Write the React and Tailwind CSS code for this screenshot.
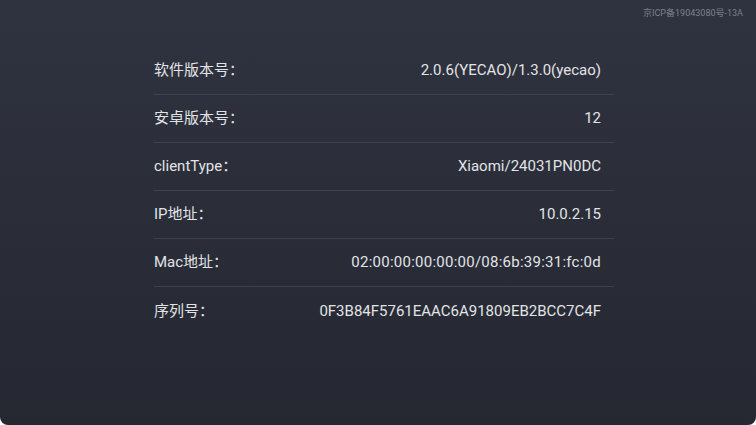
const rows = [
  { label: "软件版本号：", value: "2.0.6(YECAO)/1.3.0(yecao)" },
  { label: "安卓版本号：", value: "12" },
  { label: "clientType：", value: "Xiaomi/24031PN0DC" },
  { label: "IP地址：", value: "10.0.2.15" },
  { label: "Mac地址：", value: "02:00:00:00:00:00/08:6b:39:31:fc:0d", wide: true },
  { label: "序列号：", value: "0F3B84F5761EAAC6A91809EB2BCC7C4F" },
];

export default function App() {
  return (
    <div className="w-[756px] h-[425px] bg-white">
      <div
        className="w-full h-full flex flex-col rounded-b-[8px] bg-gradient-to-b from-[#2f3340] to-[#252831] text-[#e2e3e6]"
        style={{ fontFamily: 'Roboto, "Noto Sans CJK SC", sans-serif' }}
      >
        {/* ICP header */}
        <div className="flex justify-end pt-[7px] pr-[13px] h-[47px]">
          <span className="text-[9px] leading-[12px] text-[#7d818b]">
            京ICP备19043080号-13A
          </span>
        </div>

        {/* Info list */}
        <div className="w-[460px] ml-[154px] flex flex-col">
          {rows.map((r, i) => (
            <div
              key={r.label}
              className={
                "h-[48px] flex items-center justify-between pr-[13px] text-[15px] " +
                (i < rows.length - 1 ? "border-b border-[#3e424d]" : "")
              }
            >
              <span>{r.label}</span>
              <span className={r.wide ? "tracking-[0.25px]" : ""}>{r.value}</span>
            </div>
          ))}
        </div>
      </div>
    </div>
  );
}
